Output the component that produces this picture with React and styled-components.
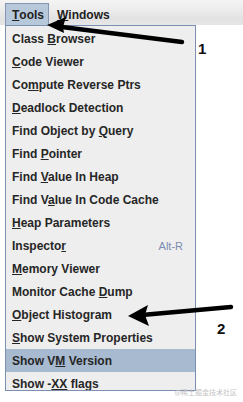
import React from 'react';
import styled, { createGlobalStyle } from 'styled-components';

const GlobalStyle = createGlobalStyle`
  html, body {
    margin: 0;
    padding: 0;
    background: #ffffff;
  }
`;

const Page = styled.div`
  position: relative;
  width: 243px;
  height: 402px;
  overflow: hidden;
  background: #ffffff;
  font-family: "Liberation Sans", Arial, sans-serif;
`;

const MenuBar = styled.div`
  display: flex;
  align-items: flex-end;
  height: 25px;
  padding-left: 5px;
  box-sizing: border-box;
  background: linear-gradient(#f4f4f4 0%, #ececec 40%, #e2e2e2 75%, #e6e6e6 100%);
`;

const MenuTitle = styled.div`
  display: flex;
  align-items: center;
  height: 22px;
  box-sizing: border-box;
  padding: 0 ${props => (props.open ? '4px' : '0')} 0 ${props => (props.open ? '6px' : '7px')};
  font-size: 12px;
  font-weight: bold;
  color: #222;
  background: ${props => (props.open ? '#b7c8db' : 'transparent')};
  border: 1px solid ${props => (props.open ? '#8597b5' : 'transparent')};
  border-bottom: none;
`;

const Panel = styled.div`
  display: flex;
  flex-direction: column;
  margin-left: 5px;
  width: 191px;
  height: 366px;
  box-sizing: border-box;
  padding-top: 1px;
  overflow: hidden;
  background: #eeeeee;
  border: 1px solid #7d8fb0;
`;

const Item = styled.div`
  display: flex;
  align-items: center;
  justify-content: space-between;
  flex: 0 0 23px;
  padding: 0 12px 0 6px;
  font-size: 12px;
  font-weight: bold;
  color: #262626;
  background: ${props => (props.active ? '#a7bad0' : 'transparent')};
`;

const Accel = styled.span`
  font-size: 11px;
  font-weight: normal;
  color: #7b8db0;
`;

const Key = styled.span`
  text-decoration: underline;
  text-underline-offset: 1px;
`;

const Overlay = styled.svg`
  position: absolute;
  left: 0;
  top: 0;
  pointer-events: none;
`;

const Label = styled.div`
  position: absolute;
  left: ${props => props.x}px;
  top: ${props => props.y}px;
  font-size: 15px;
  font-weight: bold;
  color: #111;
`;

const Watermark = styled.div`
  position: absolute;
  right: 6px;
  bottom: 5px;
  font-family: "Noto Sans CJK SC", sans-serif;
  font-size: 7px;
  color: #c4c4c4;
`;

const items = [
  ['Class ', 'B', 'rowser'],
  ['', 'C', 'ode Viewer'],
  ['Co', 'm', 'pute Reverse Ptrs'],
  ['', 'D', 'eadlock Detection'],
  ['Find Object by ', 'Q', 'uery'],
  ['Find ', 'P', 'ointer'],
  ['Find ', 'V', 'alue In Heap'],
  ['Find V', 'a', 'lue In Code Cache'],
  ['', 'H', 'eap Parameters'],
  ['Inspecto', 'r', '', 'Alt-R'],
  ['', 'M', 'emory Viewer'],
  ['Monitor Cache ', 'D', 'ump'],
  ['', 'O', 'bject Histogram'],
  ['', 'S', 'how System Properties'],
  ['Show V', 'M', ' Version'],
  ['Show -', 'XX', ' flags'],
];

const App = () => (
  <Page>
    <GlobalStyle />
    <MenuBar>
      <MenuTitle open><Key>T</Key>ools</MenuTitle>
      <MenuTitle><Key>W</Key>indows</MenuTitle>
    </MenuBar>
    <Panel>
      {items.map(([pre, key, post, accel], i) => (
        <Item key={i} active={i === 14}>
          <span>{pre}<Key>{key}</Key>{post}</span>
          {accel && <Accel>{accel}</Accel>}
        </Item>
      ))}
    </Panel>

    <Overlay width="243" height="402" viewBox="0 0 243 402">
      <path d="M182 42 L62 27" stroke="#000" strokeWidth="4.5" strokeLinecap="round" fill="none" />
      <path d="M47 25 L66 17 L63 27 L64 33 Z" fill="#000" />
      <path d="M231 307 L142 315" stroke="#000" strokeWidth="4.5" strokeLinecap="round" fill="none" />
      <path d="M128 316 L148 305 L145 315 L149 326 Z" fill="#000" />
    </Overlay>
    <Label x={198} y={40}>1</Label>
    <Label x={217} y={320}>2</Label>
    <Watermark>@稀土掘金技术社区</Watermark>
  </Page>
);

export default App;
